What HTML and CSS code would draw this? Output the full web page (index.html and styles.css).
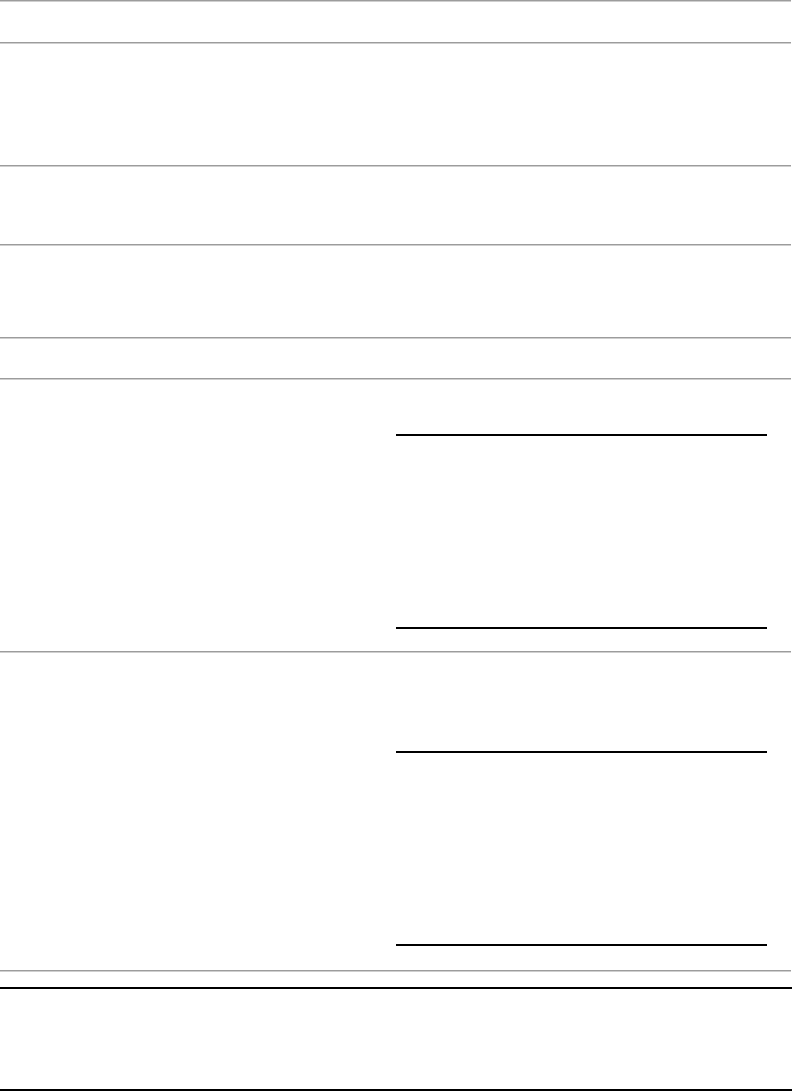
FILE: index.html
```html
<!DOCTYPE html>
<html lang="en">
<head>
    <meta charset="UTF-8">
    <meta name="viewport" content="width=device-width, initial-scale=1.0">
    <title>Form</title>
    <link rel="stylesheet" href="styles.css">
</head>
<body>
    <div class="page">
        <hr class="rule">
        <div class="block block-1"></div>
        <hr class="rule">
        <div class="block block-2"></div>
        <hr class="rule">
        <div class="block block-3"></div>
        <hr class="rule">
        <div class="block block-4"></div>
        <hr class="rule">
        <div class="block block-5"></div>
        <hr class="rule">

        <!-- two column rows -->
        <div class="row row-a">
            <div class="col-left"></div>
            <div class="col-right">
                <div class="field"></div>
            </div>
        </div>
        <hr class="rule">
        <div class="row row-b">
            <div class="col-left"></div>
            <div class="col-right">
                <div class="field"></div>
            </div>
        </div>
        <hr class="rule">

        <div class="footer">
            <div class="footer-box"></div>
        </div>
    </div>
</body>
</html>
```

FILE: styles.css
```css
body {
    margin: 0;
    font-family: "Liberation Sans", Arial, sans-serif;
    background-color: #fff;
}
.page {
    width: 792px;
}
.rule {
    margin: 0;
    width: 791px;
    height: 0;
    border: none;
    border-top: 1px solid #9c9c9c;
    border-bottom: 1px solid #cfcfcf;
}
.block-1 {
    height: 40px;
}
.block-2 {
    height: 121px;
}
.block-3 {
    height: 77px;
}
.block-4 {
    height: 91px;
}
.block-5 {
    height: 39px;
}
.row {
    display: flex;
}
.col-left {
    width: 396px;
}
.col-right {
    width: 371px;
}
.row-a {
    height: 271px;
    padding-top: 54px;
    box-sizing: border-box;
}
.row-b {
    height: 317px;
    padding-top: 98px;
    box-sizing: border-box;
}
.field {
    border-top: 2px solid #000;
    border-bottom: 2px solid #000;
}
.row-a .field {
    height: 191px;
}
.row-b .field {
    height: 191px;
}
.footer {
    padding-top: 15px;
}
.footer-box {
    height: 100px;
    border-top: 2px solid #000;
    border-bottom: 2px solid #000;
}
```
